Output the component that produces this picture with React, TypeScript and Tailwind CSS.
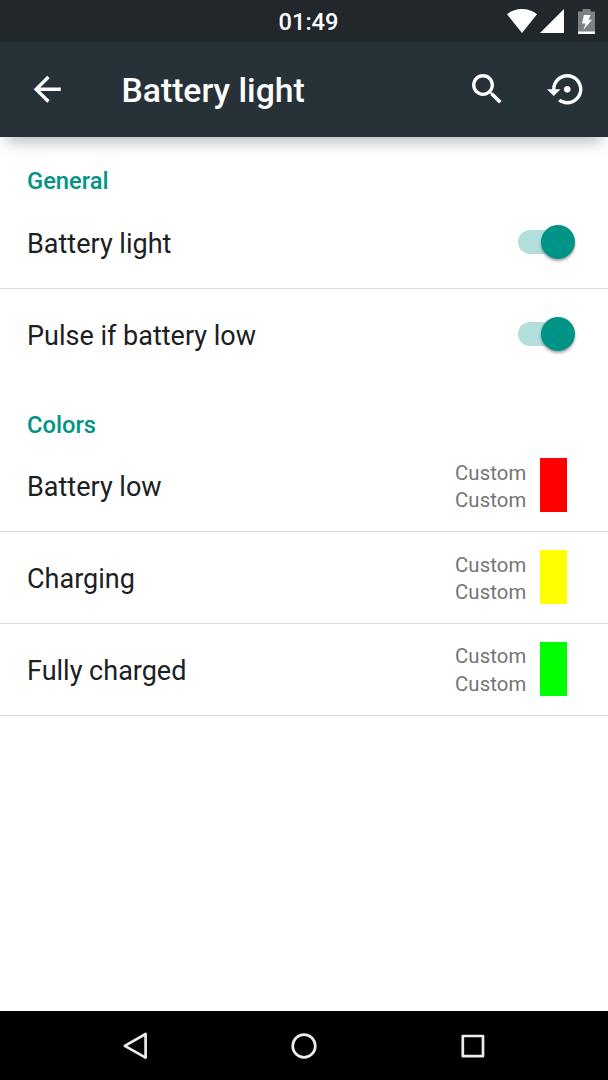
import type { ReactNode } from "react";

const lights = [
  { label: "Battery low", swatch: "bg-[#ff0000]" },
  { label: "Charging", swatch: "bg-[#ffff00]" },
  { label: "Fully charged", swatch: "bg-[#00ff00]" },
];

function StatusBar() {
  return (
    <div className="relative flex h-[42px] shrink-0 items-center justify-end bg-[#21272a] pr-[13px]">
      <span className="absolute inset-x-0 pt-[2px] pl-[9px] text-center text-[23.6px] leading-[42px] font-medium text-white">
        01:49
      </span>
      <svg width="30" height="25" viewBox="0 0 30 25" fill="#fff">
        <path d="M0 5.300C4 2 9 0 15 0s11 2 15 5.300L15 24z" />
      </svg>
      <svg className="ml-[3px]" width="24" height="25" viewBox="0 0 24 25" fill="#fff">
        <path d="M24 0v24H0z" />
      </svg>
      <svg className="ml-[14px]" width="17" height="25" viewBox="0 0 17 25">
        <path d="M4.500 0h8v2.500H17V25H0V2.500h4.500z" fill="#7d8182" />
        <path d="M0 22.500h17V25H0z" fill="#fff" />
        <path d="M6 6h6.500l-2 4.800h3.500L5.500 20.800l2-6.400H4z" fill="#fff" />
      </svg>
    </div>
  );
}

function AppBarIcon({ d, className }: { d: string; className?: string }) {
  return (
    <svg className={className} width="40.5" height="40.5" viewBox="0 0 24 24" fill="#fff">
      <path d={d} />
    </svg>
  );
}

function AppBar() {
  return (
    <header className="relative flex h-[95px] shrink-0 items-center bg-[#273238] pr-[20.5px] pl-[27px] shadow-[0_12px_14px_-7px_rgba(0,0,0,0.27)]">
      <AppBarIcon d="M20 11H7.830l5.590-5.590L12 4l-8 8 8 8 1.410-1.410L7.830 13H20v-2z" />
      <h1 className="ml-[54px] flex-1 pt-[2px] text-[33.7px] leading-[40px] font-medium text-white">
        Battery light
      </h1>
      <AppBarIcon d="M15.500 14h-.790l-.280-.270C15.410 12.590 16 11.110 16 9.500 16 5.910 13.090 3 9.500 3S3 5.910 3 9.500 5.910 16 9.500 16c1.610 0 3.090-.590 4.230-1.570l.270.280v.790l5 4.990L20.490 19l-4.990-5zm-6 0C7.010 14 5 11.990 5 9.500S7.010 5 9.500 5 14 7.010 14 9.500 11.990 14 9.500 14z" />
      <AppBarIcon
        className="ml-[40px]"
        d="M14 12c0-1.100-.900-2-2-2s-2 .900-2 2 .900 2 2 2 2-.900 2-2zm-2-9c-4.970 0-9 4.030-9 9H0l4 4 4-4H5c0-3.870 3.130-7 7-7s7 3.130 7 7-3.130 7-7 7c-1.510 0-2.910-.490-4.060-1.300l-1.420 1.440C8.040 20.300 9.940 21 12 21c4.970 0 9-4.030 9-9s-4.030-9-9-9z"
      />
    </header>
  );
}

function SectionTitle({ children }: { children: ReactNode }) {
  return (
    <h2 className="h-[60px] px-[27px] pt-[30px] text-[23.7px] leading-[28px] font-medium text-[#009486]">
      {children}
    </h2>
  );
}

function Row({ label, divider = true, children }: { label: string; divider?: boolean; children: ReactNode }) {
  return (
    <div
      className={`flex h-[91.75px] items-center justify-between border-b pl-[27px] ${
        divider ? "border-[#d9d9d9]" : "border-transparent"
      }`}
    >
      <span className="pt-[3px] text-[27px] leading-[32px] text-[#1b2023]">{label}</span>
      {children}
    </div>
  );
}

function Switch() {
  return (
    <div className="mr-[33px] flex h-[34px] w-[57px] items-center">
      <div className="flex h-[24px] w-[48px] items-center rounded-full bg-[#b2dfdb]">
        <div className="ml-[23px] size-[34px] shrink-0 rounded-full bg-[#009486] shadow-[0_2px_3px_rgba(0,0,0,0.35)]" />
      </div>
    </div>
  );
}

function NavBar() {
  return (
    <nav className="flex h-[69px] shrink-0 items-center bg-black pl-[121px]">
      <svg width="366" height="30" viewBox="0 0 366 30" fill="none" stroke="#ececec" strokeWidth="2.700" strokeLinejoin="round">
        <path d="M24.600 3v23.600L3.800 14.800z" />
        <circle cx="183" cy="15" r="11.300" />
        <rect x="341.800" y="5" width="20.200" height="20.200" />
      </svg>
    </nav>
  );
}

export default function App() {
  return (
    <div className="flex h-[1080px] w-[608px] flex-col overflow-hidden bg-white font-[Roboto,sans-serif]">
      <StatusBar />
      <AppBar />
      <main className="flex-1">
        <SectionTitle>General</SectionTitle>
        <Row label="Battery light">
          <Switch />
        </Row>
        <Row label="Pulse if battery low" divider={false}>
          <Switch />
        </Row>
        <SectionTitle>Colors</SectionTitle>
        {lights.map((light) => (
          <Row key={light.label} label={light.label}>
            <div className="mr-[41px] flex items-center pb-[1px]">
              <div className="pt-[4px] text-[20.3px] leading-[27.5px] tracking-[0.15px] text-[#757575]">
                <p>Custom</p>
                <p>Custom</p>
              </div>
              <div className={`ml-[13.5px] h-[54px] w-[27px] ${light.swatch}`} />
            </div>
          </Row>
        ))}
      </main>
      <NavBar />
    </div>
  );
}
